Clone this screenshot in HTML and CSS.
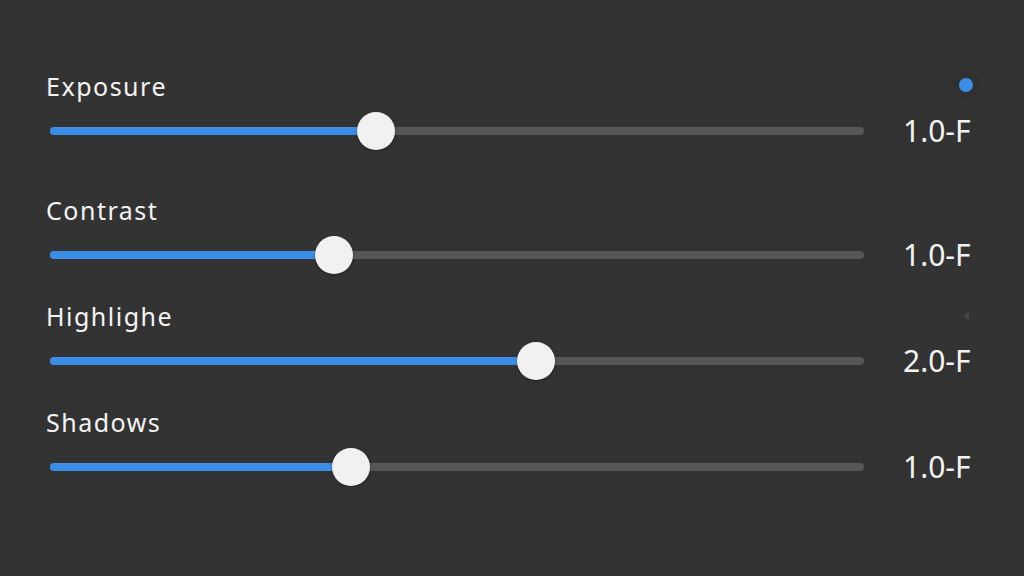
FILE: index.html
```html
<!DOCTYPE html>
<html>
  <head>
    <meta charset="utf-8">
    <meta name="viewport" content="width=device-width, initial-scale=1">
    <title>Adjustments</title>
    <link rel="stylesheet" href="styles.css">
  </head>
  <body>
    <div class="panel">
      <div class="adjust adjust-first">
        <label class="name">Exposure</label>
        <span class="marker dot"></span>
        <div class="track"><div class="fill" style="width: 40%"></div><span class="thumb" style="left: 40%"></span></div>
        <span class="value">1.0-F</span>
      </div>
      <div class="adjust">
        <label class="name">Contrast</label>
        <span class="marker"></span>
        <div class="track"><div class="fill" style="width: 34.9%"></div><span class="thumb" style="left: 34.9%"></span></div>
        <span class="value">1.0-F</span>
      </div>
      <div class="adjust">
        <label class="name">Highlighe</label>
        <span class="marker arrow"></span>
        <div class="track"><div class="fill" style="width: 59.7%"></div><span class="thumb" style="left: 59.7%"></span></div>
        <span class="value">2.0-F</span>
      </div>
      <div class="adjust">
        <label class="name">Shadows</label>
        <span class="marker"></span>
        <div class="track"><div class="fill" style="width: 37%"></div><span class="thumb" style="left: 37%"></span></div>
        <span class="value">1.0-F</span>
      </div>
    </div>
  </body>
</html>
```
FILE: styles.css
```css
body {
  margin: 0;
  background: #333333;
  color: #f4f4f4;
  font-family: "Noto Sans", "Open Sans", sans-serif;
}

.panel {
  display: flex;
  flex-direction: column;
  gap: 24px;
  padding: 69px 51px 0 46px;
}

.adjust {
  display: grid;
  grid-template-columns: 1fr 70px;
  grid-template-rows: 34px 40px;
  column-gap: 39px;
  row-gap: 8px;
  align-items: center;
}

.adjust-first {
  margin-bottom: 18px;
}

.name {
  font-size: 25px;
  line-height: 34px;
  letter-spacing: 1.5px;
}

.marker {
  justify-self: end;
}

.dot {
  width: 14px;
  height: 14px;
  margin-top: -3px;
  border-radius: 50%;
  background: #3a8ee8;
  box-shadow: 0 0 0 7px rgba(0, 0, 0, 0.05);
}

.arrow {
  width: 0;
  height: 0;
  margin-right: 4px;
  border-top: 5px solid transparent;
  border-bottom: 5px solid transparent;
  border-right: 6px solid #454545;
}

.track {
  position: relative;
  height: 8px;
  margin-left: 4px;
  border-radius: 4px;
  background: #565656;
}

.fill {
  height: 100%;
  border-radius: 4px;
  background: #3a8ee8;
}

.thumb {
  position: absolute;
  top: 50%;
  width: 38px;
  height: 38px;
  border-radius: 50%;
  background: #f1f1f1;
  box-shadow: 0 1px 3px rgba(0, 0, 0, 0.35);
  transform: translate(-50%, -50%);
}

.value {
  font-size: 30px;
  line-height: 40px;
  white-space: nowrap;
}
```
